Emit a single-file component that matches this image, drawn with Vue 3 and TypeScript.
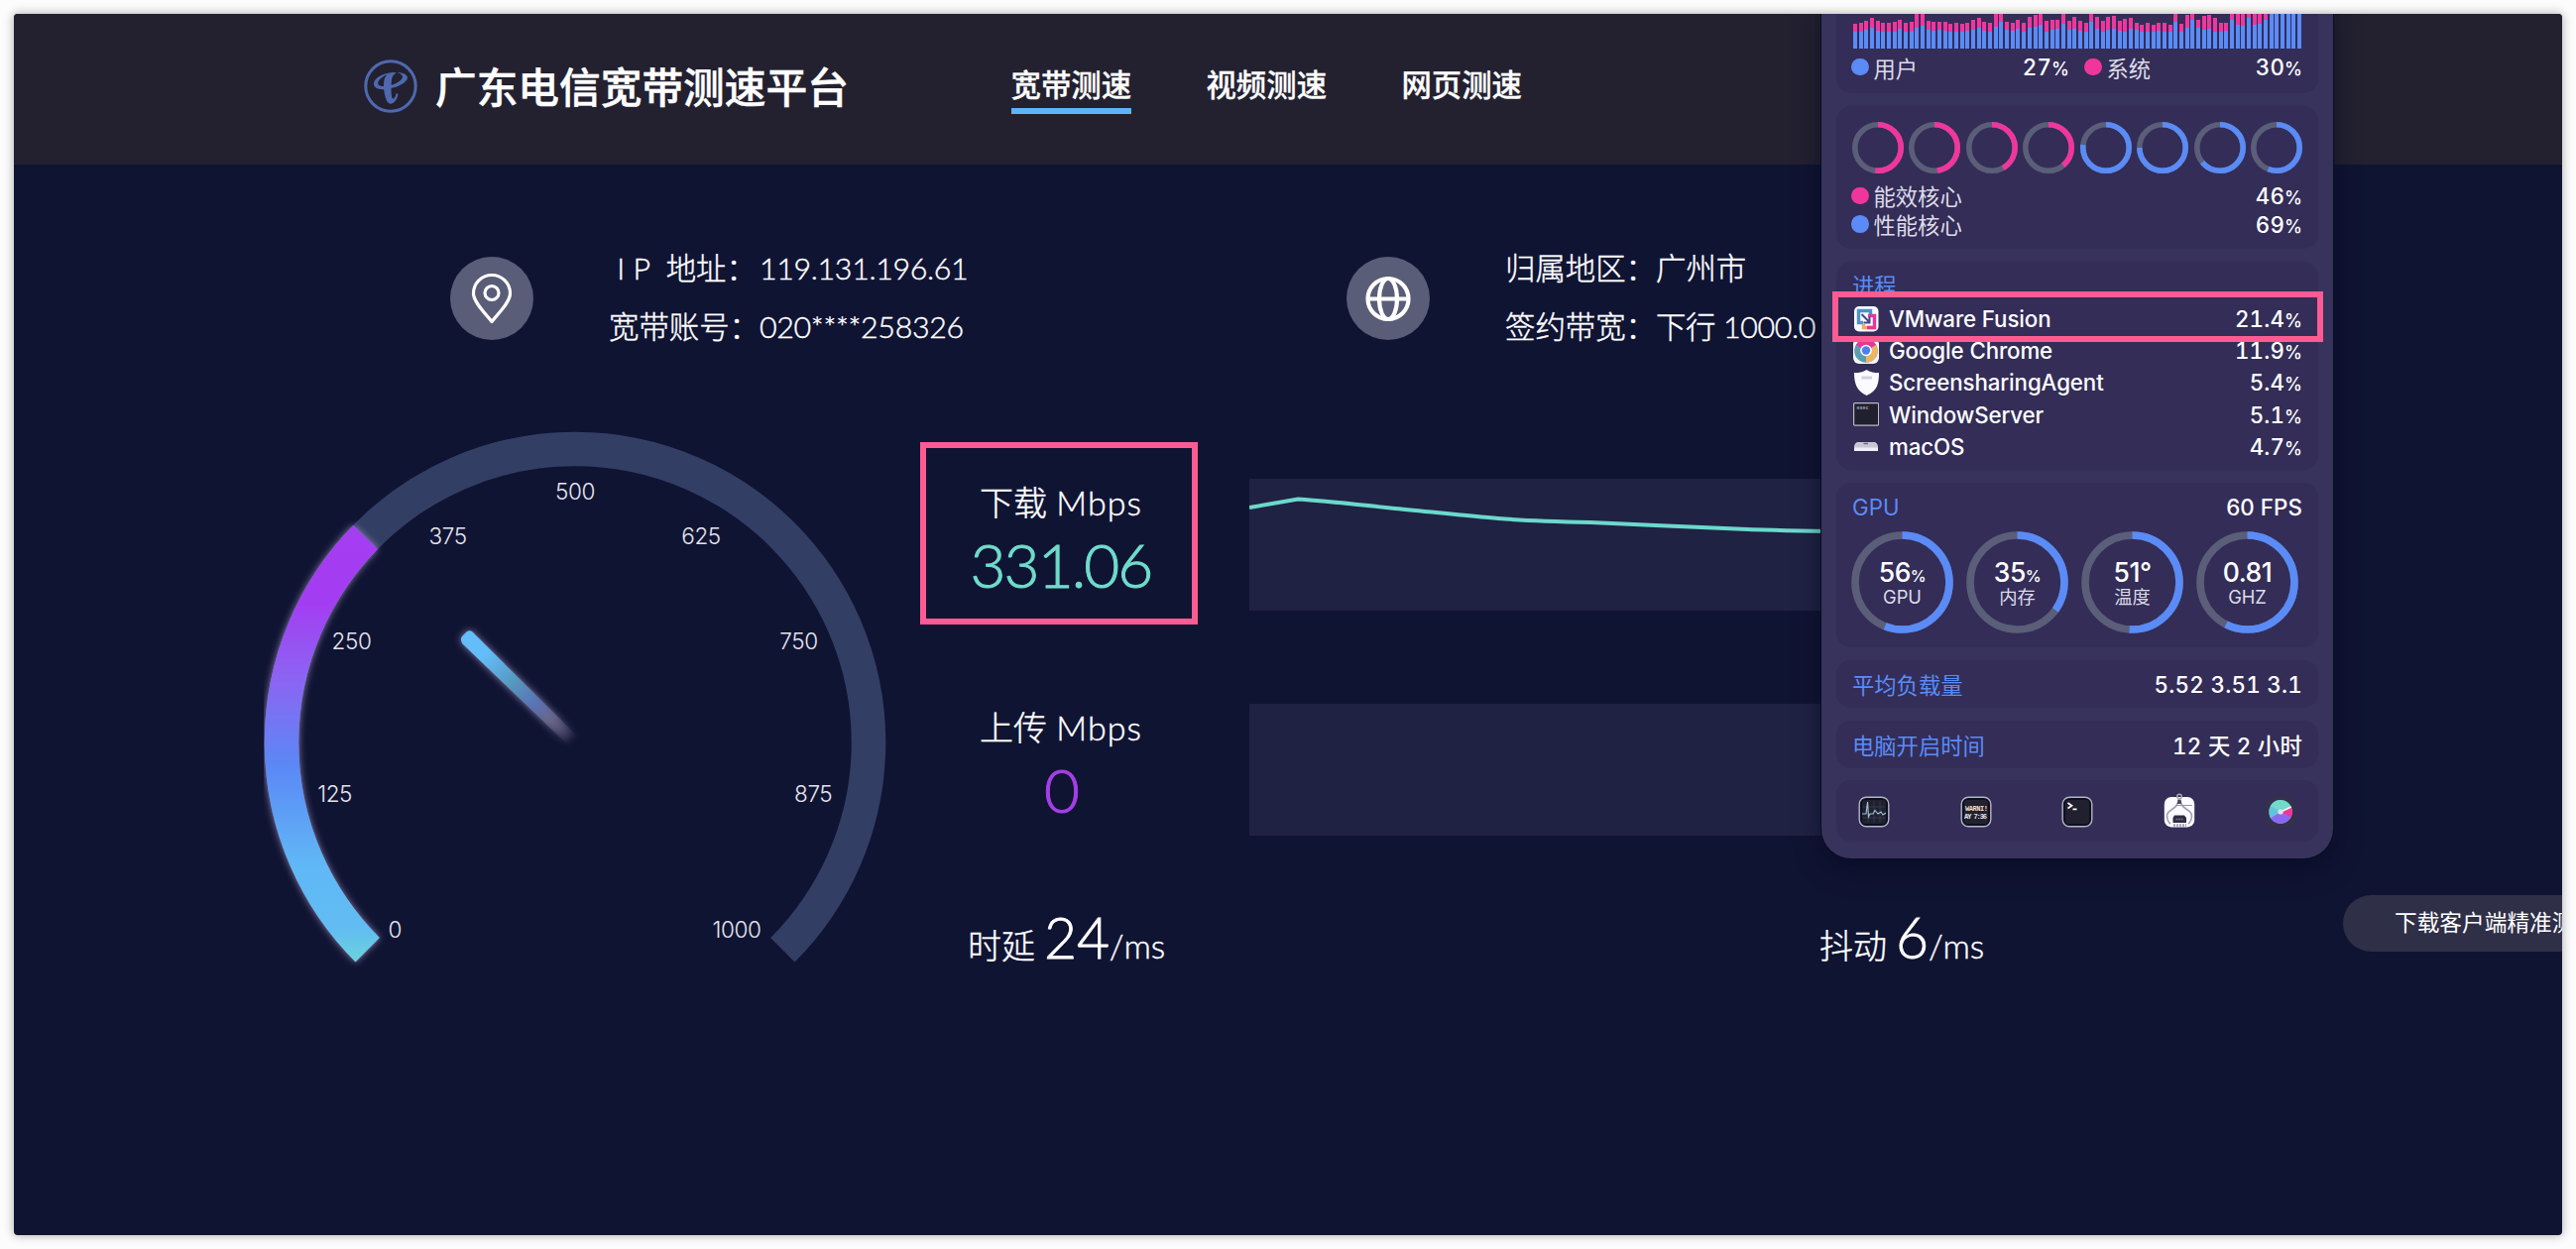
<script setup lang="ts">
interface Bar { blue: number; total: number }
interface Ring { pct: number; color: string }
interface Proc { name: string; value: string; icon: string }
interface Gpu { value: string; unit: string; label: string; pct: number }

const BLUE = '#5a8bf6'
const PINK = '#f0369d'

const tabs = ['宽带测速', '视频测速', '网页测速']

// CPU history, in thirds of a pixel above the baseline
const bluePart = [50, 50, 57, 62, 54, 51, 51, 51, 59, 52, 52, 63, 68, 56, 54, 56, 54, 50, 50, 50, 53, 56, 63, 53, 52, 66, 80, 56, 53, 59, 52, 63, 66, 73, 52, 58, 60, 74, 56, 60, 55, 51, 81, 60, 50, 57, 60, 53, 50, 59, 56, 51, 50, 50, 54, 52, 50, 80, 52, 62, 86, 62, 57, 59, 52, 51, 54, 86, 71, 69, 92, 71, 74, 88, 110, 110, 110, 110, 110, 110]
const totalPart = [76, 78, 84, 94, 83, 79, 77, 81, 86, 77, 82, 110, 110, 85, 82, 82, 80, 75, 78, 76, 79, 87, 94, 80, 77, 110, 110, 80, 78, 86, 79, 96, 102, 110, 83, 86, 88, 110, 84, 97, 83, 79, 110, 97, 85, 96, 98, 84, 91, 92, 79, 72, 79, 72, 79, 79, 72, 110, 75, 101, 110, 88, 98, 101, 92, 78, 78, 110, 110, 110, 110, 110, 110, 110, 110, 110, 110, 110, 110, 110]
const bars: Bar[] = bluePart.map((b, i) => ({ blue: b / 3, total: totalPart[i] / 3 }))

const cores: Ring[] = [
  { pct: 52, color: PINK }, { pct: 48, color: PINK }, { pct: 42, color: PINK }, { pct: 39, color: PINK },
  { pct: 77, color: BLUE }, { pct: 75, color: BLUE }, { pct: 64, color: BLUE }, { pct: 56, color: BLUE },
]

const procs: Proc[] = [
  { name: 'VMware Fusion', value: '21.4', icon: 'vm' },
  { name: 'Google Chrome', value: '11.9', icon: 'chrome' },
  { name: 'ScreensharingAgent', value: '5.4', icon: 'shield' },
  { name: 'WindowServer', value: '5.1', icon: 'exec' },
  { name: 'macOS', value: '4.7', icon: 'mac' },
]

const gpus: Gpu[] = [
  { value: '56', unit: '%', label: 'GPU', pct: 56 },
  { value: '35', unit: '%', label: '内存', pct: 35 },
  { value: '51°', unit: '', label: '温度', pct: 51 },
  { value: '0.81', unit: '', label: 'GHZ', pct: 57.5 },
]

const ticks = [
  { t: '0', x: 131.3, y: 501.8 }, { t: '125', x: 70.6, y: 365.3 }, { t: '250', x: 87.5, y: 211.4 },
  { t: '375', x: 184.6, y: 104.9 }, { t: '500', x: 313, y: 59.5 }, { t: '625', x: 440, y: 104.9 },
  { t: '750', x: 538.5, y: 211.4 }, { t: '875', x: 553.2, y: 365.3 }, { t: '1000', x: 476, y: 501.8 },
]
</script>

<template>
  <div class="page">
    <div class="window">
      <header class="header">
        <svg class="logo" viewBox="0 0 54 54" width="54" height="54">
          <circle cx="27" cy="27" r="25.2" fill="none" stroke="#4f69b0" stroke-width="3" />
          <path d="M27.5 13.5C19 14 11.500 18 10 23.500C9.200 28 14 30.500 20 30.200C31 29.500 43.500 24 44 18.500C44 15 39 12.800 33.500 13.200C38 14.500 40 16.500 38.500 19C36 23.500 27 27 19.500 27C14.500 27 13 24.500 15 21.500C17 18.500 21.500 15.500 27.500 13.500Z" fill="#4f69b0" />
          <path d="M33 13.500C27 11.500 22 14.500 20.500 20.500C19.200 27 20.500 34 22 39C23 43 25.500 45.500 28 44.500C31.500 43.500 34 39 34.500 34.500L32.500 34.500C32 37.500 30.500 40 29 39.500C27 38 27.500 25 28 20C28.500 16.500 30.500 14.500 33 13.500Z" fill="#4f69b0" />
        </svg>
        <h1 class="title">广东电信宽带测速平台</h1>
        <nav class="nav">
          <a v-for="(t, i) in tabs" :key="t" class="tab" :class="{ active: i === 0 }">{{ t }}</a>
        </nav>
      </header>

      <section class="info">
        <div class="badge">
          <svg viewBox="0 0 84 84" width="84" height="84">
            <path d="M42 65.500C35.500 57 23.500 46 23.500 37A18.500 18.500 0 0 1 60.500 37C60.500 46 48.500 57 42 65.500Z" fill="none" stroke="#fff" stroke-width="3.200" stroke-linejoin="round" />
            <circle cx="42" cy="36.500" r="7" fill="none" stroke="#fff" stroke-width="3.200" />
          </svg>
        </div>
        <div class="lines first">
          <p><span class="key">&nbsp;I P&nbsp; 地址：</span><span class="num">119.131.196.61</span></p>
          <p><span class="key">宽带账号：</span><span class="num">020****258326</span></p>
        </div>
        <div class="badge">
          <svg viewBox="0 0 84 84" width="84" height="84" fill="none" stroke="#fff" stroke-width="4.200">
            <circle cx="42" cy="42.500" r="20.500" />
            <ellipse cx="42" cy="42.500" rx="9" ry="20.500" />
            <path d="M21.500 42.500H62.500" />
          </svg>
        </div>
        <div class="lines">
          <p><span class="key">归属地区：</span><span>广州市</span></p>
          <p><span class="key">签约带宽：</span><span class="num">下行 1000.0</span></p>
        </div>
      </section>

      <section class="main">
        <svg class="gauge" viewBox="0 0 626 560" width="626" height="560">
          <defs>
            <linearGradient id="arc" gradientUnits="userSpaceOnUse" x1="0" y1="94" x2="0" y2="535">
              <stop offset="0" stop-color="#a53cf2" />
              <stop offset="0.180" stop-color="#a33ef2" />
              <stop offset="0.360" stop-color="#8a66f2" />
              <stop offset="0.550" stop-color="#5a88f5" />
              <stop offset="0.780" stop-color="#60b8f6" />
              <stop offset="0.920" stop-color="#62bcf2" />
              <stop offset="1" stop-color="#6ad4da" />
            </linearGradient>
            <linearGradient id="needle" gradientUnits="userSpaceOnUse" x1="203" y1="206" x2="311" y2="311">
              <stop offset="0" stop-color="#62bdf8" />
              <stop offset="0.180" stop-color="#62bdf8" />
              <stop offset="0.450" stop-color="#5696bd" />
              <stop offset="0.660" stop-color="#5670b4" stop-opacity="0.950" />
              <stop offset="0.800" stop-color="#606384" stop-opacity="0.800" />
              <stop offset="1" stop-color="#3a3456" stop-opacity="0" />
            </linearGradient>
            <filter id="glow" x="-20%" y="-20%" width="140%" height="140%">
              <feDropShadow dx="0" dy="0" stdDeviation="3.500" flood-color="#c9b8e8" flood-opacity="0.650" />
            </filter>
          </defs>
          <path d="M103.700 522.300A296 296 0 1 1 522.300 522.300" fill="none" stroke="#333e65" stroke-width="34.500" />
          <path d="M103.700 522.300A296 296 0 0 1 101.500 106" fill="none" stroke="url(#arc)" stroke-width="34.500" filter="url(#glow)" />
          <path d="M199 206L203.500 201.500Q206.500 199 209.500 201.500L315 306.500L306 315.500L199.500 213.500Q196.500 209 199 206Z" fill="url(#needle)" filter="url(#glow)" />
          <text v-for="k in ticks" :key="k.t" class="tick" :x="k.x" :y="k.y + 8" text-anchor="middle">{{ k.t }}</text>
        </svg>

        <div class="results">
          <div class="speed">
            <div class="metric">
              <span class="mlabel">下载 <i>Mbps</i></span>
              <span class="mvalue down">331.06</span>
            </div>
            <div class="chart">
              <svg viewBox="0 0 900 133" width="900" height="133">
                <path d="M0 29L49 20.600C70 22 110 26 147 30C180 33 220 37.500 251 40C280 42.500 320 43.500 344 44C380 45.500 460 49.500 497 50.700C530 52 580 53 640 54" fill="none" stroke="#6bd9cc" stroke-width="4" />
              </svg>
            </div>
          </div>
          <div class="speed upload">
            <div class="metric">
              <span class="mlabel">上传 <i>Mbps</i></span>
              <span class="mvalue up">0</span>
            </div>
            <div class="chart"></div>
          </div>
          <div class="latency">
            <div class="lat delay">时延 <b>24</b><i>/ms</i></div>
            <div class="lat jitter">抖动 <b>6</b><i>/ms</i></div>
            <div class="client">下载客户端精准测速</div>
          </div>
        </div>
      </section>

      <div class="frame frame-speed"></div>

      <aside class="panel">
        <div class="card cpu">
          <div class="bars">
            <span v-for="(b, i) in bars" :key="i" class="bar" :style="{ height: b.total + 'px' }">
              <em :style="{ height: b.blue + 'px' }"></em>
            </span>
          </div>
          <div class="pair">
            <div class="row"><i class="dot blue"></i><span class="name">用户</span><span class="val">27<small>%</small></span></div>
            <div class="row"><i class="dot pink"></i><span class="name">系统</span><span class="val">30<small>%</small></span></div>
          </div>
        </div>

        <div class="card cores">
          <div class="rings">
            <svg v-for="(c, i) in cores" :key="i" viewBox="0 0 52 52" width="52" height="52">
              <circle cx="26" cy="26" r="23.200" fill="none" stroke="#5b5e78" stroke-width="5.600" />
              <circle cx="26" cy="26" r="23.200" fill="none" :stroke="c.color" stroke-width="5.600" pathLength="100" :stroke-dasharray="c.pct + ' 100'" transform="rotate(-90 26 26)" />
            </svg>
          </div>
          <div class="row"><i class="dot pink"></i><span class="name">能效核心</span><span class="val">46<small>%</small></span></div>
          <div class="row"><i class="dot blue"></i><span class="name">性能核心</span><span class="val">69<small>%</small></span></div>
        </div>

        <div class="card procs">
          <div class="head">进程</div>
          <div v-for="p in procs" :key="p.name" class="proc">
            <svg viewBox="0 0 26 26" width="26" height="26">
              <g v-if="p.icon === 'vm'">
                <rect x="1" y="0" width="24.500" height="25.500" rx="5" fill="#fbfaff" />
                <path d="M10 16.500H5.500V4.500H17.500V8" fill="none" stroke="#4b93c9" stroke-width="3.400" />
                <path d="M10.500 18V21.500H21.500" fill="none" stroke="#e9ae6a" stroke-width="3.400" />
                <path d="M15 9.500H21.500V21.500H14" fill="none" stroke="#e8359a" stroke-width="3.400" />
                <path d="M8.500 8L16.500 16M16.500 10.500V16.500H10.500" fill="none" stroke="#3f4a86" stroke-width="2" />
              </g>
              <g v-else-if="p.icon === 'chrome'">
                <rect x="0" y="0" width="26" height="26" rx="6" fill="#f6f4fb" />
                <circle cx="13" cy="13" r="11.800" fill="#5a9fae" />
                <path d="M13 13L2.800 7A11.800 11.800 0 0 1 23.200 7Z" fill="#e8359a" />
                <path d="M13 13L23.200 7A11.800 11.800 0 0 1 13 24.800Z" fill="#ecb463" />
                <circle cx="13" cy="12.500" r="5.800" fill="#fff" />
                <circle cx="13" cy="12.500" r="4.200" fill="#4f7fee" />
              </g>
              <g v-else-if="p.icon === 'shield'">
                <path d="M13.500 0C17 2.500 21 3 26 3C26 13 25 21 13.500 26C3 21 1 13 1 3C6 3 10 2.500 13.500 0Z" fill="#fbfaff" />
                <path d="M8.500 8H19" stroke="#d3d0e2" stroke-width="3" />
              </g>
              <g v-else-if="p.icon === 'exec'">
                <rect x="0.600" y="1.600" width="25" height="22.500" rx="1" fill="#20202f" stroke="#b9b7c8" stroke-width="1.200" />
                <text x="3.500" y="8" class="exec">exec</text>
              </g>
              <g v-else>
                <path d="M4 9H22Q24.500 10 25 13V17.500H1V13Q1.500 10 4 9Z" fill="#c9c7d4" />
                <path d="M1 14.500H25V18H1Z" fill="#efedf5" />
                <path d="M10.500 10.500H15" stroke="#6c6a85" stroke-width="1.500" />
              </g>
            </svg>
            <span class="pname">{{ p.name }}</span>
            <span class="val">{{ p.value }}<small>%</small></span>
          </div>
        </div>

        <div class="card gpu">
          <div class="gpuhead"><span>GPU</span><span class="fps">60 FPS</span></div>
          <div class="dials">
            <div v-for="g in gpus" :key="g.label" class="dial">
              <svg viewBox="0 0 103 103" width="103" height="103">
                <circle cx="51.500" cy="51.500" r="47.500" fill="none" stroke="#5b5e78" stroke-width="7.600" />
                <circle cx="51.500" cy="51.500" r="47.500" fill="none" :stroke="BLUE" stroke-width="7.600" pathLength="100" :stroke-dasharray="g.pct + ' 100'" transform="rotate(-90 51.500 51.500)" />
              </svg>
              <div class="dtext"><span class="dval">{{ g.value }}<small v-if="g.unit">{{ g.unit }}</small></span><span class="dlab">{{ g.label }}</span></div>
            </div>
          </div>
        </div>

        <div class="card line"><span>平均负载量</span><span class="rv load">5.52 3.51 3.1</span></div>
        <div class="card line uptime"><span>电脑开启时间</span><span class="rv days">12 天 2 小时</span></div>

        <div class="card dock">
          <svg viewBox="0 0 32 32" width="32" height="32">
            <rect x="1.200" y="1.200" width="29.600" height="29.600" rx="7" fill="#0b1024" stroke="#b4b3c2" stroke-width="1.400" />
            <rect x="4" y="4" width="24" height="24" rx="3" fill="#20202e" />
            <path d="M10 5V27M16 5V27M22 5V27M5 11H27M5 22H27" stroke="#3a3f55" stroke-width="0.800" />
            <path d="M4 18H8L9.500 6L10.500 21L12 18H15L17 14.500L20 18L23 16L25 19L28 17" fill="none" stroke="#a3c3d4" stroke-width="1.100" />
          </svg>
          <svg viewBox="0 0 32 32" width="32" height="32">
            <rect x="1.200" y="1.200" width="29.600" height="29.600" rx="7" fill="#0b1024" stroke="#b4b3c2" stroke-width="1.400" />
            <rect x="4" y="4" width="24" height="24" rx="3" fill="#24212e" />
            <text x="5" y="14.500" class="warn" fill="#f0dcc4" textLength="23">WARNI!</text>
            <text x="4" y="23" class="warn" fill="#e9e4ee" textLength="23">AY 7:36</text>
          </svg>
          <svg viewBox="0 0 32 32" width="32" height="32">
            <rect x="1.200" y="1.200" width="29.600" height="29.600" rx="7" fill="#0b1024" stroke="#b4b3c2" stroke-width="1.400" />
            <rect x="4" y="4" width="24" height="24" rx="3" fill="#20202e" />
            <path d="M6.500 7L10.500 9.800L6.500 12.500M11.500 13.300H15.500" fill="none" stroke="#fff" stroke-width="1.700" />
          </svg>
          <svg class="tall" viewBox="0 0 32 32" width="32" height="32">
            <rect x="0.800" y="1" width="30.400" height="30.400" rx="7" fill="#fbfaff" />
            <path d="M14.500 3.500L17.500 3.500L18.500 8H13.500Z" fill="#4a4960" />
            <circle cx="16" cy="0.500" r="2.300" fill="none" stroke="#a9a7b8" stroke-width="1.400" />
            <path d="M14 8C12 14 3.500 13.500 3.500 20Q4 26 7 28M18 8C20 14 28.500 13.500 28.500 20Q28 26 25 28" fill="none" stroke="#a09eb2" stroke-width="1.600" />
            <path d="M12 9.500H29" stroke="#8b8aa0" stroke-width="0.900" />
            <path d="M11 19.500H21L23 22V27H9.500V22Z" fill="#2e2c44" />
            <path d="M12.500 23.500H20" stroke="#77758c" stroke-width="1.600" stroke-dasharray="1.800 0.800" />
            <path d="M10 29.500H23" stroke="#a09eb2" stroke-width="2.500" stroke-dasharray="2 1" />
          </svg>
          <svg viewBox="0 0 32 32" width="32" height="32">
            <rect x="1" y="1" width="30" height="30.500" rx="7" fill="#34314a" />
            <circle cx="16" cy="16" r="11.800" fill="#62c3dd" />
            <path d="M16 16L5.800 10A11.800 11.800 0 0 1 26.500 10.500Z" fill="#72d9cb" />
            <path d="M16 16L26.800 11A11.800 11.800 0 0 1 26.200 22Z" fill="#f0369d" />
            <path d="M16 16L26.200 22A11.800 11.800 0 0 1 6 22.500Z" fill="#8b68f2" />
            <path d="M16 16L26.800 11" stroke="#f6f3fb" stroke-width="1.800" />
            <circle cx="16" cy="16" r="2.600" fill="#e4e0ee" />
          </svg>
        </div>
      </aside>

      <div class="frame frame-proc"></div>
    </div>
  </div>
</template>

<style>
body { margin: 0; background: #fcfcfc; overflow: hidden; }
</style>

<style scoped>
* { box-sizing: border-box; }
.page { width: 2598px; height: 1260px; padding: 14px; background: #fcfcfc; overflow: hidden; font-family: "Lato", "Noto Sans CJK SC", sans-serif; color: #fff; }
.window { position: relative; width: 2570px; height: 1232px; border-radius: 4px; background: #101433; overflow: hidden; box-shadow: 0 0 10px 1px rgba(0, 0, 0, .28); white-space: nowrap; }
.header { display: flex; align-items: center; height: 152px; background: #232130; padding-left: 353px; padding-bottom: 6px; }
.logo { flex: none; }
.title { margin: -2px 0 0 18px; width: 417px; font: 500 41.700px/60px "Noto Sans CJK SC", sans-serif; -webkit-text-stroke: .5px #fff; }
.nav { display: flex; gap: 75.400px; margin-left: 163.500px; }
.tab { height: 51px; font: 500 30.400px/40px "Noto Sans CJK SC", sans-serif; -webkit-text-stroke: .3px #fff; margin-top: 5px; }
.tab.active { border-bottom: 6px solid #5fb4f6; }

.info { display: flex; align-items: center; height: 178px; margin-top: 45px; padding-left: 440px; }
.badge { width: 84px; height: 84px; border-radius: 50%; background: #5a5d77; flex: none; margin-top: 1px; }
.badge svg { display: block; }
.lines { margin-left: 76px; font-size: 30.400px; font-weight: 300; -webkit-text-stroke: .4px #fff; }
.lines.first { width: 744px; }
.lines p { margin: 0; display: flex; height: 59px; line-height: 58px; }
.key { width: 152px; flex: none; }
.num { letter-spacing: -.35px; }

.main { display: flex; margin-top: 47px; }
.gauge { flex: none; margin-left: 253px; overflow: visible; }
.tick { font: 300 22.500px Inter, sans-serif; fill: #e4e4ee; letter-spacing: -.4px; }
.results { width: 1700px; margin-left: 36px; padding-top: 47px; flex: none; }
.speed { display: flex; height: 226.500px; }
.speed.upload { height: 200px; }
.metric { width: 282px; display: flex; flex-direction: column; align-items: center; }
.mlabel { font-size: 34px; line-height: 48px; font-weight: 300; -webkit-text-stroke: .4px #fff; }
.mlabel i { font-style: normal; letter-spacing: 1px; }
.mvalue { font-size: 62px; line-height: 76px; font-weight: 300; letter-spacing: -1.900px; }
.down { color: #6fdccb; -webkit-text-stroke: 1px #6fdccb; }
.up { color: #a53fe6; -webkit-text-stroke: 1px #a53fe6; }
.chart { width: 900px; height: 133px; margin-left: 49px; background: #1f2242; flex: none; }
.chart svg { display: block; }
.latency { display: flex; align-items: flex-start; }
.lat { font-size: 34px; line-height: 70px; font-weight: 300; height: 70px; flex: none; -webkit-text-stroke: .4px #fff; letter-spacing: -.1px; }
.lat b { font-size: 57px; font-weight: 300; -webkit-text-stroke: .8px #fff; }
.lat i { font-style: normal; }
.delay { width: 859px; margin-left: 47px; }
.jitter { width: 528px; }
.client { width: 320px; height: 57px; margin-top: -7px; flex: none; border-radius: 28.500px; background: #2f2f48; padding-left: 52px; font: 400 22.700px/54px "Noto Sans CJK SC", sans-serif; }

.frame { position: absolute; border: 6px solid #fd5b93; }
.frame-speed { left: 914px; top: 432px; width: 280px; height: 184px; }
.frame-proc { left: 1834px; top: 280px; width: 495px; height: 51px; }

.panel { position: absolute; left: 1823px; top: -40px; width: 516px; height: 892px; border-radius: 30px; background: #37335c; box-shadow: 0 0 0 1px #0a0d20, 0 10px 26px rgba(0, 10, 30, .55); padding: 0 15px; font-family: Inter, "Noto Sans CJK SC", sans-serif; font-size: 22.300px; }
.card { background: #332d57; border-radius: 15px; margin-bottom: 13px; padding: 0 16px 0 16px; }
.cpu { height: 120px; padding-top: 38px; }
.bars { display: flex; align-items: flex-end; justify-content: space-between; height: 37px; padding: 0 0 0 1px; }
.bar { width: 4px; background: #f0369d; display: flex; align-items: flex-end; }
.bar em { width: 4px; background: #5a8bf6; display: block; }
.pair { display: grid; grid-template-columns: 219px 219px; justify-content: space-between; margin-top: 4px; }
.row { display: flex; align-items: center; height: 28.700px; }
.pair .row { height: 29px; }
.dot { width: 17.500px; height: 17.500px; border-radius: 50%; margin-left: -1px; margin-right: 5px; flex: none; }
.dot.blue { background: #5a8bf6; }
.dot.pink { background: #f0369d; }
.name { color: #dddbe8; flex: 1; }
.val { margin-left: auto; font-weight: 500; font-variant-numeric: tabular-nums; letter-spacing: .2px; }
.val small { font-size: 18px; letter-spacing: 0; }
.cores { height: 144px; padding-top: 15.500px; }
.rings { display: flex; justify-content: space-between; height: 60.500px; }
.procs { height: 210px; padding-top: 9px; }
.head { color: #5a8bf6; height: 32.500px; line-height: 32px; }
.proc { display: flex; align-items: center; height: 32.200px; }
.proc svg { margin-left: 1px; }
.pname { margin-left: 10px; font-weight: 500; letter-spacing: -.1px; }
.gpu { height: 166px; padding-top: 9px; }
.gpuhead { display: flex; justify-content: space-between; height: 39.500px; line-height: 32px; color: #5a8bf6; }
.fps { color: #fff; font-weight: 500; letter-spacing: .1px; }
.dials { display: flex; justify-content: space-between; margin: 0 4px 0 -1px; }
.dial { display: grid; }
.dial > * { grid-area: 1 / 1; }
.dtext { display: flex; flex-direction: column; align-items: center; padding-top: 25px; }
.dval { font-size: 26.500px; line-height: 32px; height: 32px; font-weight: 500; letter-spacing: -.5px; }
.dval small { font-size: 16px; line-height: 1; }
.dlab { font-size: 18.300px; line-height: 19px; color: #dddbe8; }
.line { display: flex; justify-content: space-between; align-items: center; height: 48px; color: #5a8bf6; }
.uptime { margin-bottom: 12px; }
.rv { color: #fff; font-weight: 500; font-variant-numeric: tabular-nums; }
.load { letter-spacing: .3px; }
.days { letter-spacing: .3px; }
.dock { display: flex; justify-content: space-between; align-items: center; height: 62px; padding: 2px 22px 0; margin-bottom: 0; }
.tall { overflow: visible; }
.exec { font: 700 5px "Liberation Mono", monospace; fill: #a8a6ba; }
.warn { font: 700 7px "Liberation Mono", monospace; }
</style>
